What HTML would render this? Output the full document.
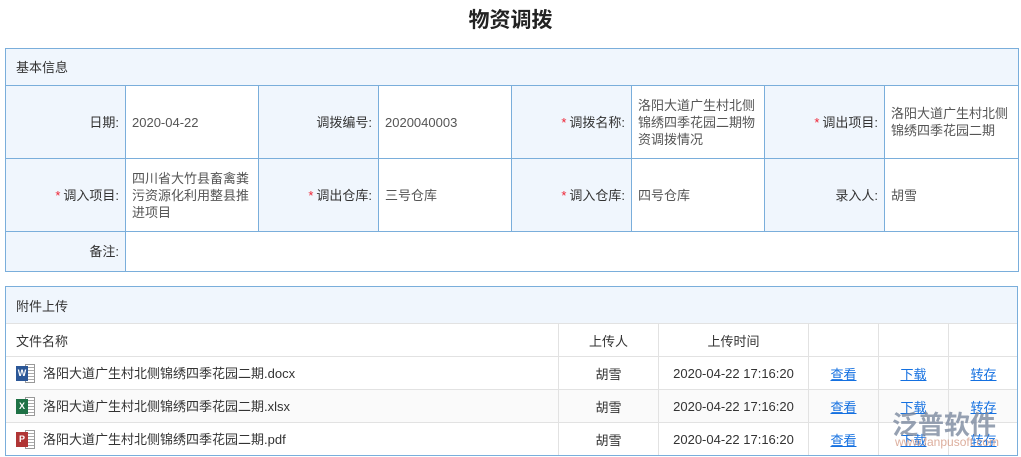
<!DOCTYPE html><html><head><meta charset="utf-8"><style>
body{margin:0;width:1021px;height:457px;background:#fff;font-family:"Liberation Sans","Noto Sans CJK SC",sans-serif;font-size:13px;color:#333;position:relative;overflow:hidden}
.t{position:absolute;top:4px;left:0;width:1021px;text-align:center;font-size:21px;font-weight:bold;color:#222}
table{border-collapse:collapse;table-layout:fixed}
#a{position:absolute;left:5px;top:48px;width:1013px}
#a td{border:1px solid #7aaedb;padding:0 6px;line-height:17px}
#a .h{background:#f0f6fd;height:36px;padding-left:10px}
#a .l{background:#f0f6fd;text-align:right;color:#333}
#a .v{color:#555}
.s{color:#e23;margin-right:3px}
#bw{position:absolute;left:5px;top:286px;width:1011px;height:168px;border:1px solid #7aaedb;overflow:hidden}
#b{width:1013px;margin:-1px 0 0 -1px}
#b td{border:1px solid #e2e2e2;height:32px;padding:0;text-align:center;color:#333}
#b td.n{text-align:left;padding-left:10px}
#b .h{background:#f0f6fd;height:36px;border-bottom:1px solid #e2e2e2}
#b tr.g td{background:#fafafa}
a{color:#1470e0;text-decoration:underline}
.ic{display:inline-block;width:19px;height:19px;vertical-align:-5px;margin-right:8px;position:relative}
.ic i{position:absolute;left:0;top:2px;width:12px;height:15px;color:#fff;font-style:normal;font-size:9px;font-weight:bold;line-height:15px;text-align:center}
.ic b{position:absolute;left:9px;top:0;width:10px;height:19px;background:repeating-linear-gradient(#fff 0 2px,#aaa 2px 3px);border:1px solid #999;box-sizing:border-box}
.wm{position:absolute;left:892px;top:405px;color:#7d8aa0;font-size:26px;font-weight:bold;opacity:.8}
.wm2{position:absolute;left:895px;top:435px;color:#d7a08c;font-size:12px;opacity:.85}
</style></head><body>
<div class="t">物资调拨</div>
<table id="a">
<colgroup><col style="width:120px"><col style="width:133px"><col style="width:120px"><col style="width:133px"><col style="width:120px"><col style="width:133px"><col style="width:120px"><col style="width:134px"></colgroup>
<tr><td class="h" colspan="8">基本信息</td></tr>
<tr style="height:73px"><td class="l">日期:</td><td class="v">2020-04-22</td><td class="l">调拨编号:</td><td class="v">2020040003</td><td class="l"><span class="s">*</span>调拨名称:</td><td class="v">洛阳大道广生村北侧锦绣四季花园二期物资调拨情况</td><td class="l"><span class="s">*</span>调出项目:</td><td class="v">洛阳大道广生村北侧锦绣四季花园二期</td></tr>
<tr style="height:73px"><td class="l"><span class="s">*</span>调入项目:</td><td class="v">四川省大竹县畜禽粪污资源化利用整县推进项目</td><td class="l"><span class="s">*</span>调出仓库:</td><td class="v">三号仓库</td><td class="l"><span class="s">*</span>调入仓库:</td><td class="v">四号仓库</td><td class="l">录入人:</td><td class="v">胡雪</td></tr>
<tr style="height:40px"><td class="l">备注:</td><td colspan="7"></td></tr>
</table>
<div id="bw">
<table id="b">
<colgroup><col style="width:553px"><col style="width:100px"><col style="width:150px"><col style="width:70px"><col style="width:70px"><col style="width:70px"></colgroup>
<tr><td class="h n" colspan="6">附件上传</td></tr>
<tr><td class="n">文件名称</td><td>上传人</td><td>上传时间</td><td></td><td></td><td></td></tr>
<tr><td class="n"><span class="ic"><b></b><i style="background:#2b5797">W</i></span>洛阳大道广生村北侧锦绣四季花园二期.docx</td><td>胡雪</td><td>2020-04-22 17:16:20</td><td><a>查看</a></td><td><a>下载</a></td><td><a>转存</a></td></tr>
<tr class="g"><td class="n"><span class="ic"><b></b><i style="background:#1e7145">X</i></span>洛阳大道广生村北侧锦绣四季花园二期.xlsx</td><td>胡雪</td><td>2020-04-22 17:16:20</td><td><a>查看</a></td><td><a>下载</a></td><td><a>转存</a></td></tr>
<tr><td class="n"><span class="ic"><b></b><i style="background:#b03535">P</i></span>洛阳大道广生村北侧锦绣四季花园二期.pdf</td><td>胡雪</td><td>2020-04-22 17:16:20</td><td><a>查看</a></td><td><a>下载</a></td><td><a>转存</a></td></tr>
</table>
</div>
<div class="wm">泛普软件</div>
<div class="wm2">www.fanpusoft.com</div>
</body></html>
